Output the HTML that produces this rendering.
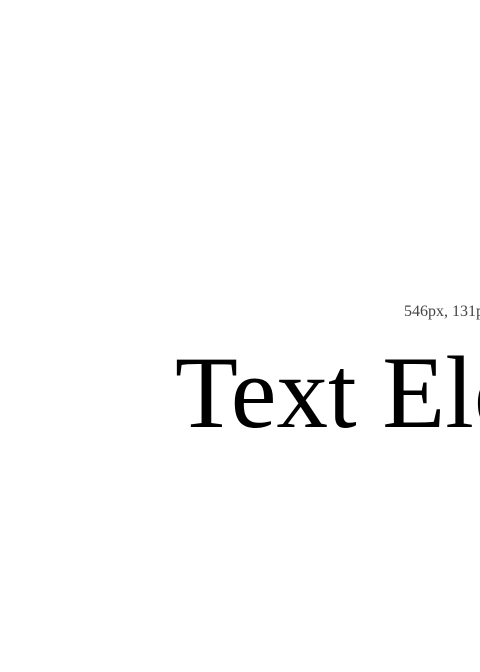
<!DOCTYPE html>
<html><head><meta charset="utf-8"><style>
html,body{margin:0;padding:0;width:480px;height:672px;overflow:hidden;background:#fff}
.w{position:relative;width:480px;height:672px;overflow:hidden}
.s{position:absolute;left:404px;top:304px;font:16px/16px "Liberation Serif",serif;color:#444;white-space:nowrap}
.b{position:absolute;left:175px;top:342px;font:103px/103px "Liberation Serif",serif;color:#000;white-space:nowrap}
</style></head><body><div class="w">
<div class="s">546px, 131px</div>
<div class="b">Text Element</div>
</div></body></html>
